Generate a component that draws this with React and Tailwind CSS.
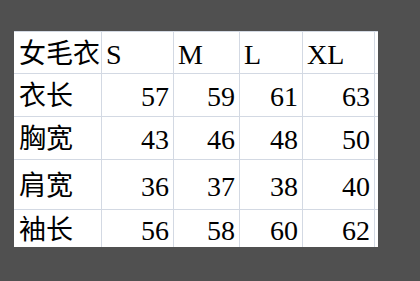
import React from "react";

const rows = [
  { label: "女毛衣", vals: ["S", "M", "L", "XL"], header: true, h: "h-[42px]", pt: "pt-[9px]" },
  { label: "衣长", vals: ["57", "59", "61", "63"], h: "h-[43px]", pt: "pt-[9px]" },
  { label: "胸宽", vals: ["43", "46", "48", "50"], h: "h-[43px]", pt: "pt-[9px]" },
  { label: "肩宽", vals: ["36", "37", "38", "40"], h: "h-[50px]", pt: "pt-[13px]" },
  { label: "袖长", vals: ["56", "58", "60", "62"], h: "h-[37px]", pt: "pt-[7px]", last: true },
];

const colW = ["w-[72px]", "w-[66px]", "w-[63px]", "w-[72px]"];

export default function App() {
  return (
    <div className="w-[420px] h-[281px] bg-[#505050] pt-[31px] pl-[14px] overflow-hidden">
      <div
        className="w-[364px] bg-white border-t border-[#d3d9e3] text-black text-[27px] leading-[27px]"
        style={{ fontFamily: '"Liberation Serif", "Noto Sans CJK SC", serif' }}
      >
        {rows.map((r, i) => (
          <div
            key={i}
            className={`flex ${r.h} ${r.last ? "" : "border-b border-[#d3d9e3]"}`}
          >
            <div className={`w-[88px] shrink-0 border-r border-[#d3d9e3] pl-[5px] ${r.pt} whitespace-nowrap`}>
              {r.label}
            </div>
            {r.vals.map((v, j) => (
              <div
                key={j}
                className={`${colW[j]} shrink-0 border-r border-[#d3d9e3] ${r.pt} whitespace-nowrap text-[28px] ${
                  r.header ? "pl-[4px] text-left" : "pr-[4px] text-right"
                }`}
              >
                {v}
              </div>
            ))}
            <div className="w-[3px] shrink-0" />
          </div>
        ))}
      </div>
    </div>
  );
}
